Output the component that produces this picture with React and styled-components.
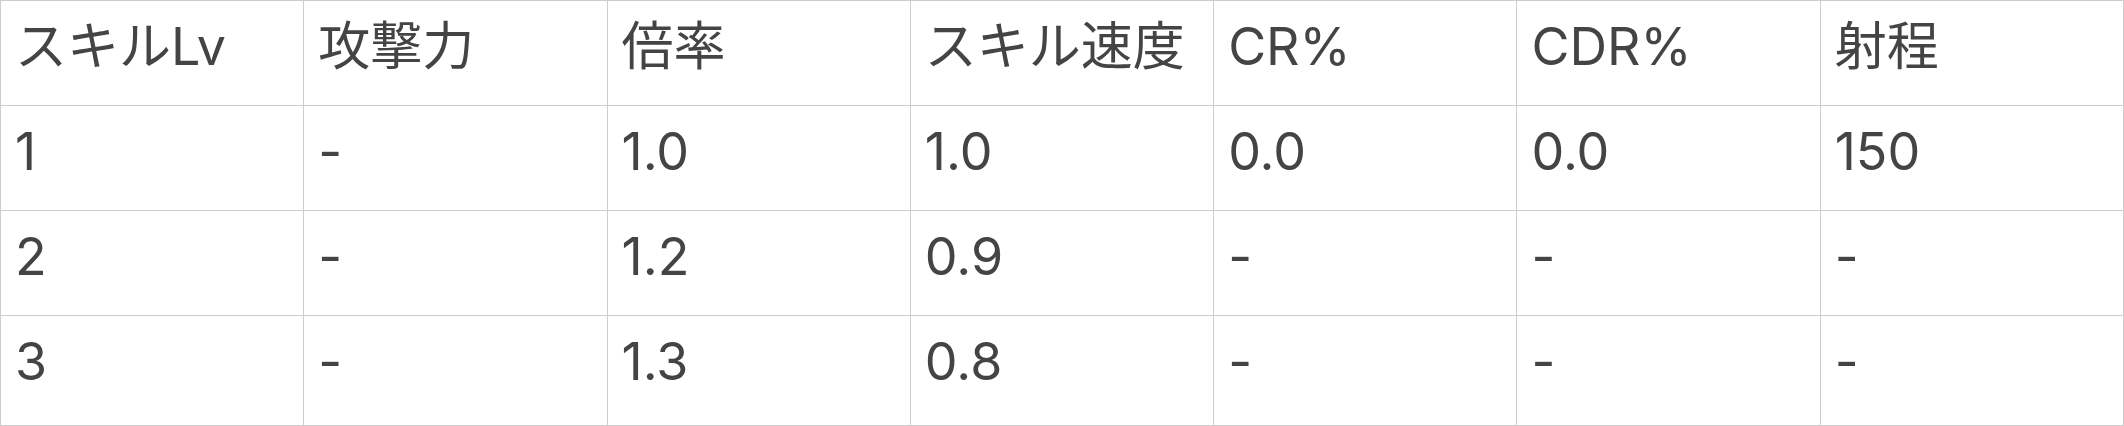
import styled, { createGlobalStyle } from "styled-components";

const GlobalStyle = createGlobalStyle`
  html, body {
    margin: 0;
    padding: 0;
    background: #ffffff;
  }
  body {
    font-family: Inter, "Noto Sans CJK JP", sans-serif;
  }
`;

const Table = styled.table`
  width: 100%;
  table-layout: fixed;
  border-collapse: collapse;
  color: #444444;
  font-size: 52px;
  line-height: 72px;
`;

const Cell = styled.td`
  border: 1px solid #cdcdcd;
  padding: 10px 14px ${p => (p.$last ? "27px" : "22px")};
  text-align: left;
  font-weight: 400;
  white-space: nowrap;
  vertical-align: top;
`;

const HeadCell = styled(Cell).attrs({ as: "th" })``;

const columns = ["スキルLv", "攻撃力", "倍率", "スキル速度", "CR%", "CDR%", "射程"];

const rows = [
  ["1", "-", "1.0", "1.0", "0.0", "0.0", "150"],
  ["2", "-", "1.2", "0.9", "-", "-", "-"],
  ["3", "-", "1.3", "0.8", "-", "-", "-"],
];

function App() {
  return (
    <>
      <GlobalStyle />
      <Table>
        <thead>
          <tr>
            {columns.map(c => (
              <HeadCell key={c}>{c}</HeadCell>
            ))}
          </tr>
        </thead>
        <tbody>
          {rows.map((r, i) => (
            <tr key={i}>
              {r.map((v, j) => (
                <Cell key={j} $last={i === rows.length - 1}>
                  {v}
                </Cell>
              ))}
            </tr>
          ))}
        </tbody>
      </Table>
    </>
  );
}

export default App;
